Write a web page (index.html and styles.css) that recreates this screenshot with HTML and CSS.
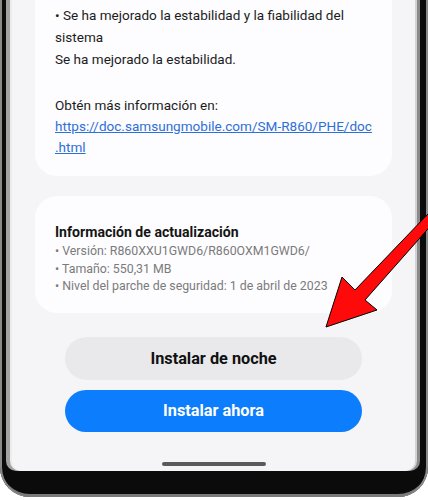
FILE: index.html
```html
<!DOCTYPE html>
<html lang="es">
<head>
<meta charset="utf-8">
<link rel="stylesheet" href="styles.css">
</head>
<body>
<div class="phone">
  <div class="screen">
    <div class="content">
      <div class="card card-notes">
        <p class="notes-a">• Se ha mejorado la estabilidad y la fiabilidad del<br>sistema<br>Se ha mejorado la estabilidad.</p>
        <p class="notes-b">Obtén más información en:<br><a class="doc-link" href="#">https://doc.samsungmobile.com/SM-R860/PHE/doc<br>.html</a></p>
      </div>
      <div class="card card-info">
        <div class="info-title">Información de actualización</div>
        <div class="info-line">• Versión: R860XXU1GWD6/R860OXM1GWD6/</div>
        <div class="info-line">• Tamaño: 550,31 MB</div>
        <div class="info-line">• Nivel del parche de seguridad: 1 de abril de 2023</div>
      </div>
      <div class="actions">
        <button class="btn btn-night">Instalar de noche</button>
        <button class="btn btn-now">Instalar ahora</button>
      </div>
    </div>
    <div class="home-bar"></div>
  </div>
  <svg class="arrow" width="428" height="500" viewBox="0 0 428 500">
    <polygon points="326,327 342,277 355,290 450,191 450,204 365,300 377,310" fill="#ff0a0a" stroke="#000" stroke-width="1" stroke-linejoin="miter"/>
  </svg>
</div>
</body>
</html>
```
FILE: styles.css
```css
html, body {
  margin: 0;
  padding: 0;
  background: #ffffff;
}
body {
  width: 428px;
  height: 500px;
  overflow: hidden;
  font-family: Roboto, "Noto Sans", "Liberation Sans", sans-serif;
}
.phone {
  position: relative;
  width: 428px;
  height: 497px;
  box-sizing: border-box;
  padding: 0 13px 0 12px;
  background: #0b0b0b;
  border-radius: 0 0 30px 30px;
  box-shadow: inset 2px 0 0 #8a8a8a, inset -2px 0 0 #8a8a8a, inset 0 -3px 0 #7a7a7a;
}
.screen {
  height: 471px;
  background: #f5f5f7;
  border-radius: 0 0 10px 10px;
  box-shadow: -2px 0 0 #ececec, -6px 0 0 #a2a2a2, 2px 0 0 #d2d2d2, 5px 0 0 #8a8a8a;
  display: flex;
  flex-direction: column;
  align-items: stretch;
}
.content {
  padding: 0 23px;
  display: flex;
  flex-direction: column;
}
.card {
  background: #fdfdff;
  padding: 0 20px;
}
.card-notes {
  border-radius: 0 0 22px 22px;
  padding-top: 4px;
  padding-bottom: 18px;
  font-size: 13.55px;
  color: #1c1c1c;
}
.card-notes p {
  margin: 0;
  white-space: nowrap;
}
.notes-a {
  line-height: 22px;
}
.notes-b {
  line-height: 21px;
  margin-top: 25px !important;
}
.doc-link {
  color: #2f6fd8;
  text-decoration: underline;
}
.card-info {
  margin-top: 20px;
  border-radius: 22px;
  padding-top: 25px;
  padding-bottom: 17px;
}
.info-title {
  font-size: 14.1px;
  font-weight: 700;
  color: #151515;
  line-height: 22px;
}
.info-line {
  font-size: 12.35px;
  color: #7b7b7b;
  line-height: 17.5px;
  white-space: nowrap;
}
.actions {
  margin-top: 24px;
  padding: 0 30px;
  display: flex;
  flex-direction: column;
  gap: 10px;
}
.btn {
  border: none;
  border-radius: 22px;
  height: 43px;
  font-family: Roboto, "Noto Sans", "Liberation Sans", sans-serif;
  font-size: 16.3px;
  font-weight: 700;
  padding: 0;
}
.btn-night {
  background: #e9e9ec;
  color: #111;
}
.btn-now {
  background: #0b7dfd;
  color: #fff;
  height: 42px;
}
.home-bar {
  align-self: center;
  margin-top: 30px;
  width: 104px;
  height: 4px;
  border-radius: 2px;
  background: #5a5a5a;
}
.arrow {
  position: absolute;
  left: 0;
  top: 0;
  pointer-events: none;
}
```
